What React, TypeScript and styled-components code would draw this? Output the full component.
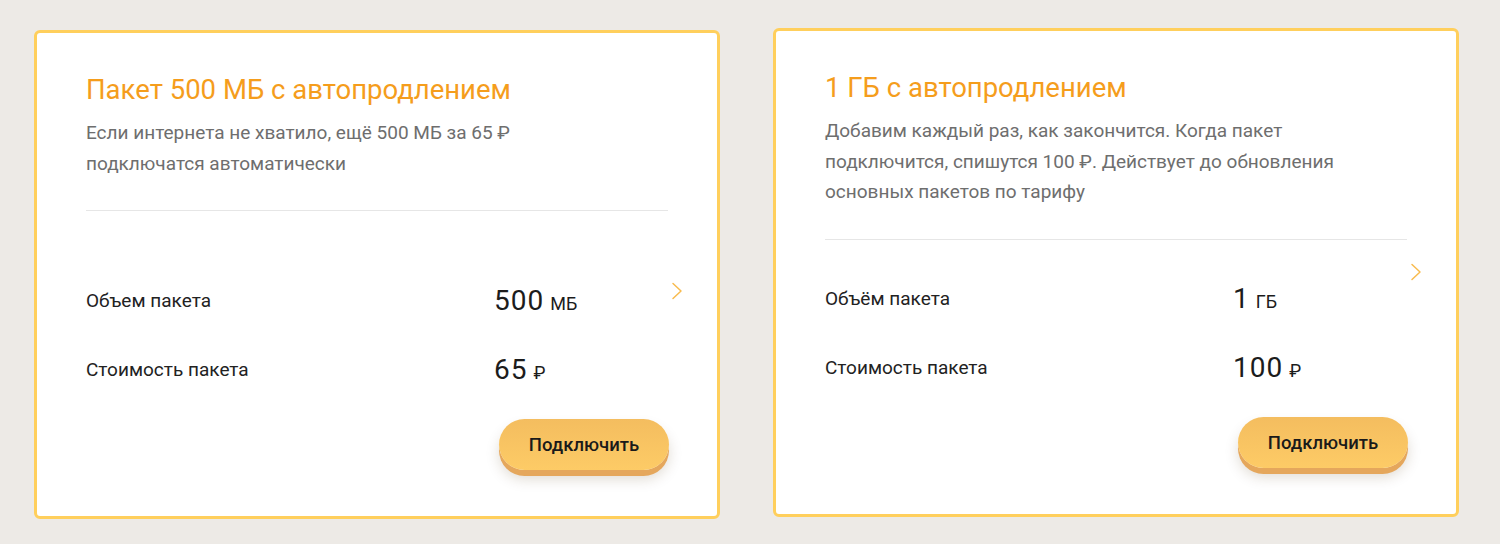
import React from 'react'
import styled, { createGlobalStyle } from 'styled-components'

const GlobalStyle = createGlobalStyle`
  html, body {
    margin: 0;
    padding: 0;
    background: #edeae6;
  }
  body {
    font-family: Roboto, 'Noto Sans', 'Liberation Sans', sans-serif;
    -webkit-font-smoothing: antialiased;
  }
`

const Page = styled.div`
  display: flex;
  align-items: flex-start;
  gap: 53px;
  padding: 28px 41px 0 34px;
  height: 544px;
  box-sizing: border-box;
`

const Card = styled.section<{ $shift: number }>`
  position: relative;
  box-sizing: border-box;
  width: 686px;
  height: 489px;
  margin-top: ${(p) => p.$shift}px;
  padding: 39px 49px 46px;
  display: flex;
  flex-direction: column;
  background: #fff;
  border: 3px solid #ffcf5c;
  border-radius: 6px;
`

const Title = styled.h2`
  margin: 0;
  font-size: 27.5px;
  line-height: 36px;
  font-weight: 400;
  color: #f59d1c;
`

const Description = styled.p`
  max-width: 540px;
  margin: 10px 0 0;
  font-size: 19px;
  line-height: 30.5px;
  color: #6e6e6e;
`

const Divider = styled.hr`
  margin: 31px 0 0;
  border: 0;
  height: 1px;
  background: #e6e6e6;
`

const Details = styled.div`
  flex: 1;
  display: flex;
  flex-direction: column;
  justify-content: flex-end;
`

const Row = styled.div`
  display: grid;
  grid-template-columns: 408px 1fr;
  align-items: center;
  height: 40px;

  & + & {
    margin-top: 29px;
  }
`

const Label = styled.span`
  font-size: 19px;
  color: #222;
`

const Value = styled.span`
  font-size: 28px;
  letter-spacing: 1px;
  color: #1c1c1c;
`

const Unit = styled.span`
  margin-left: 6px;
  font-size: 18px;
  color: #1c1c1c;
`

const Actions = styled.div`
  display: flex;
  justify-content: flex-end;
  margin-top: 30px;
`

const Button = styled.button`
  width: 170px;
  height: 51px;
  margin-right: -1px;
  border: 0;
  border-radius: 26px;
  background: linear-gradient(180deg, #f4bd5f 0%, #fdcb66 100%);
  box-shadow: 0 6px 0 #e5a75c, 0 9px 14px rgba(80, 50, 0, 0.18);
  font-family: inherit;
  font-size: 18.5px;
  font-weight: 500;
  color: #1a1a1a;
  cursor: pointer;
`

const Chevron = styled.svg<{ $top: number }>`
  position: absolute;
  right: 33px;
  top: ${(p) => p.$top}px;
  width: 13px;
  height: 18px;
`

type Plan = {
  title: string
  description: string
  volumeLabel: string
  volume: string
  unit: string
  price: string
  shift: number
  chevronTop: number
}

const plans: Plan[] = [
  {
    title: 'Пакет 500 МБ с автопродлением',
    description: 'Если интернета не хватило, ещё 500 МБ за 65 ₽ подключатся автоматически',
    volumeLabel: 'Объем пакета',
    volume: '500',
    unit: 'МБ',
    price: '65',
    shift: 2,
    chevronTop: 249,
  },
  {
    title: '1 ГБ с автопродлением',
    description:
      'Добавим каждый раз, как закончится. Когда пакет подключится, спишутся 100 ₽. Действует до обновления основных пакетов по тарифу',
    volumeLabel: 'Объём пакета',
    volume: '1',
    unit: 'ГБ',
    price: '100',
    shift: 0,
    chevronTop: 232,
  },
]

const PlanCard = ({ plan }: { plan: Plan }) => (
  <Card $shift={plan.shift}>
    <Title>{plan.title}</Title>
    <Description>{plan.description}</Description>
    <Divider />
    <Chevron $top={plan.chevronTop} viewBox="0 0 13 18" fill="none">
      <path d="M2 1.5 L10 9 L2 16.5" stroke="#f8bb4e" strokeWidth="1.5" strokeLinecap="round" strokeLinejoin="round" />
    </Chevron>
    <Details>
      <Row>
        <Label>{plan.volumeLabel}</Label>
        <span>
          <Value>{plan.volume}</Value>
          <Unit>{plan.unit}</Unit>
        </span>
      </Row>
      <Row>
        <Label>Стоимость пакета</Label>
        <span>
          <Value>{plan.price}</Value>
          <Unit>₽</Unit>
        </span>
      </Row>
      <Actions>
        <Button>Подключить</Button>
      </Actions>
    </Details>
  </Card>
)

const App = () => (
  <>
    <GlobalStyle />
    <Page>
      {plans.map((plan) => (
        <PlanCard key={plan.title} plan={plan} />
      ))}
    </Page>
  </>
)

export default App
